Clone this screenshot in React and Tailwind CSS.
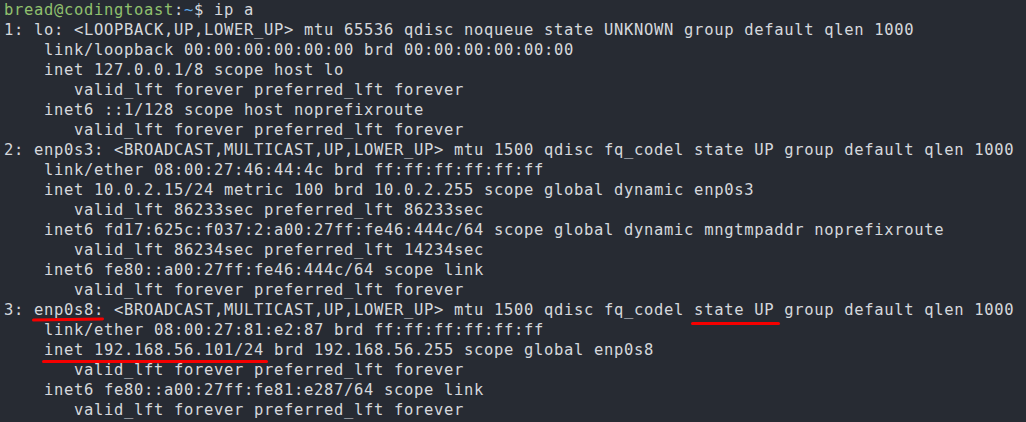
import React from 'react';

const lines = [
  '1: lo: <LOOPBACK,UP,LOWER_UP> mtu 65536 qdisc noqueue state UNKNOWN group default qlen 1000',
  '    link/loopback 00:00:00:00:00:00 brd 00:00:00:00:00:00',
  '    inet 127.0.0.1/8 scope host lo',
  '       valid_lft forever preferred_lft forever',
  '    inet6 ::1/128 scope host noprefixroute',
  '       valid_lft forever preferred_lft forever',
  '2: enp0s3: <BROADCAST,MULTICAST,UP,LOWER_UP> mtu 1500 qdisc fq_codel state UP group default qlen 1000',
  '    link/ether 08:00:27:46:44:4c brd ff:ff:ff:ff:ff:ff',
  '    inet 10.0.2.15/24 metric 100 brd 10.0.2.255 scope global dynamic enp0s3',
  '       valid_lft 86233sec preferred_lft 86233sec',
  '    inet6 fd17:625c:f037:2:a00:27ff:fe46:444c/64 scope global dynamic mngtmpaddr noprefixroute',
  '       valid_lft 86234sec preferred_lft 14234sec',
  '    inet6 fe80::a00:27ff:fe46:444c/64 scope link',
  '       valid_lft forever preferred_lft forever',
  '3: enp0s8: <BROADCAST,MULTICAST,UP,LOWER_UP> mtu 1500 qdisc fq_codel state UP group default qlen 1000',
  '    link/ether 08:00:27:81:e2:87 brd ff:ff:ff:ff:ff:ff',
  '    inet 192.168.56.101/24 brd 192.168.56.255 scope global enp0s8',
  '       valid_lft forever preferred_lft forever',
  '    inet6 fe80::a00:27ff:fe81:e287/64 scope link',
  '       valid_lft forever preferred_lft forever',
];

// hand-drawn red marks over the screenshot
function Mark({ className }) {
  return <div className={`absolute h-[3px] rounded-full bg-[#f50000] ${className}`} />;
}

export default function App() {
  return (
    <div className="relative w-[1026px] h-[422px] overflow-hidden bg-[#272b33] text-[#d5d8dd] font-['DejaVu_Sans_Mono','Liberation_Mono',monospace] text-[15.5px] leading-[20px] tracking-[0.67px] whitespace-pre pl-[4px]">
      <div>
        <span className="text-[#90c06e]">bread@codingtoast</span>
        <span>:</span>
        <span className="text-[#5ea7e6]">~</span>
        <span>$ ip a</span>
      </div>
      {lines.map((l, i) => (
        <div key={i}>{l}</div>
      ))}

      <Mark className="left-[32px] top-[318px] w-[72px] -rotate-[1deg]" />
      <Mark className="left-[691px] top-[322px] w-[89px]" />
      <Mark className="left-[42px] top-[360px] w-[226px]" />
    </div>
  );
}
